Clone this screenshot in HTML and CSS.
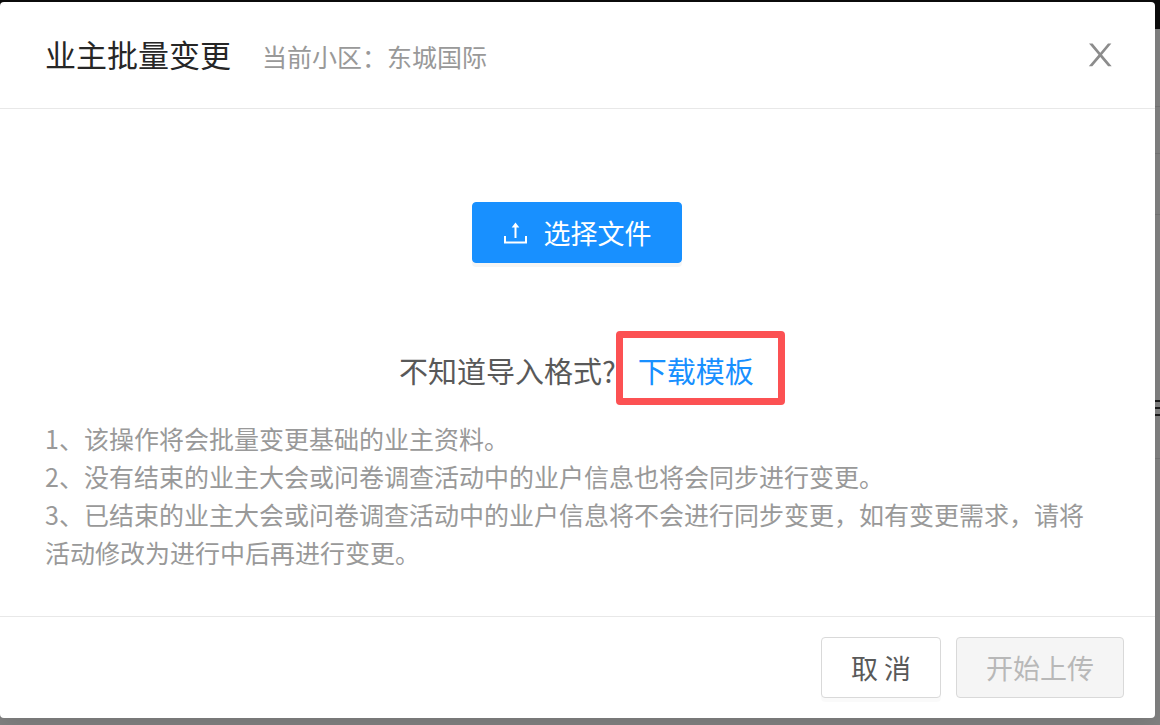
FILE: index.html
```
<!DOCTYPE html>
<html lang="zh-CN">
<head>
    <meta charset="UTF-8">
    <meta name="viewport" content="width=device-width, initial-scale=1.0">
    <title>业主批量变更</title>
    <link rel="stylesheet" href="styles.css">
</head>
<body>
    <!-- page behind the mask -->
    <div class="page" aria-hidden="true">
        <div class="page-header"></div>
        <div class="page-tabs"></div>
        <div class="page-filter"></div>
        <div class="page-title"></div>
        <div class="page-tools">
            <div class="menu-icon"><i></i><i></i><i></i></div>
        </div>
        <div class="page-rows"></div>
    </div>

    <div class="modal" role="dialog" aria-labelledby="modal-title">
        <header class="modal-header">
            <h1 id="modal-title">业主批量变更</h1>
            <span class="community">当前小区：东城国际</span>
            <button class="close" type="button" aria-label="关闭">
                <svg viewBox="0 0 24 26" width="24" height="26" fill="currentColor">
                    <path d="M1 2.5H4.6L12.3 11.7L20 2.5H23.4L14 13.8L23.7 25.2H20.1L12.3 16L4.3 25.2H0.8L10.5 13.8Z"/>
                </svg>
            </button>
        </header>

        <main class="modal-body">
            <button class="btn btn-primary" type="button">
                <svg viewBox="0 0 27 27" width="27" height="27">
                    <path d="M3 17V23.5H24V17" fill="none" stroke="currentColor" stroke-width="2"/>
                    <path d="M13.5 19V7" fill="none" stroke="currentColor" stroke-width="2"/>
                    <path d="M13.5 3.5L17.3 8.5H9.7Z" fill="currentColor"/>
                </svg>
                <span>选择文件</span>
            </button>
            <p class="template">
                <span>不知道导入格式?</span>
                <a href="#">下载模板</a>
            </p>
            <div class="tips">
                <p>1、该操作将会批量变更基础的业主资料。</p>
                <p>2、没有结束的业主大会或问卷调查活动中的业户信息也将会同步进行变更。</p>
                <p>3、已结束的业主大会或问卷调查活动中的业户信息将不会进行同步变更，如有变更需求，请将活动修改为进行中后再进行变更。</p>
            </div>
        </main>

        <footer class="modal-footer">
            <button class="btn" type="button">取 消</button>
            <button class="btn" type="button" disabled>开始上传</button>
        </footer>
    </div>
</body>
</html>
```
FILE: styles.css
```
* {
    margin: 0;
    padding: 0;
    box-sizing: border-box;
}

:root {
    --blue: #1890ff;
    --red: #fc5153;
    --line: #e8e8e8;
    --muted: #999;
}

body {
    position: relative;
    min-height: 100vh;
    padding: 2px 5px 7px 0;
    background-color: #828282;
    color: #595959;
    font-family: "Noto Sans CJK SC", sans-serif;
}

button {
    font-family: inherit;
    cursor: pointer;
}

/* masked page */
.page {
    position: absolute;
    inset: 0;
    overflow: hidden;
}

.page-header {
    height: 29px;
    background-color: #0c0c0c;
}

.page-tabs,
.page-filter,
.page-title,
.page-tools {
    border-bottom: 1px solid #757575;
}

.page-tabs {
    height: 78px;
}

.page-filter {
    height: 47px;
}

.page-title {
    height: 61px;
}

.page-tools {
    display: flex;
    justify-content: flex-end;
    align-items: flex-end;
    height: 244px;
    padding-bottom: 42px;
}

.menu-icon {
    display: grid;
    gap: 5px;
    width: 18px;
}

.menu-icon i {
    height: 2px;
    background-color: #1a1a1a;
}

/* dialog */
.modal {
    position: relative;
    background-color: #fff;
    border-radius: 4px;
    box-shadow: 0 8px 24px rgba(0, 0, 0, 0.1);
}

.modal-header {
    display: flex;
    align-items: center;
    gap: 31px;
    padding: 29px 43px 31px 45px;
    border-bottom: 1px solid var(--line);
}

.modal-header h1 {
    color: #262626;
    font-size: 31px;
    font-weight: 400;
    line-height: 46px;
}

.community {
    color: var(--muted);
    font-size: 25px;
    line-height: 46px;
    padding-top: 2px;
    margin-bottom: -2px;
}

.close {
    display: flex;
    margin-left: auto;
    border: none;
    background: none;
    color: #8c8c8c;
}

.modal-body {
    display: flex;
    flex-direction: column;
    align-items: center;
    padding: 93px 47px 45px 45px;
}

.btn {
    display: flex;
    align-items: center;
    justify-content: center;
    height: 61px;
    padding: 0 29px;
    border: 1px solid #d9d9d9;
    border-radius: 4px;
    background-color: #fff;
    box-shadow: 0 4px 0 rgba(0, 0, 0, 0.02);
    color: #595959;
    font-size: 27px;
    line-height: 40px;
}

.btn-primary {
    gap: 15px;
    border-color: var(--blue);
    background-color: var(--blue);
    box-shadow: 0 4px 0 rgba(0, 0, 0, 0.04);
    color: #fff;
}

.btn:disabled {
    background-color: #f5f5f5;
    box-shadow: none;
    color: #b8b8b8;
    cursor: not-allowed;
}

.template {
    display: flex;
    gap: 22px;
    margin-top: 85px;
    font-size: 29px;
    line-height: 44px;
}

.template a {
    position: relative;
    color: var(--blue);
    text-decoration: none;
}

/* red frame round the download link */
.template a::after {
    content: '';
    position: absolute;
    inset: -17px -31px -13px -22px;
    border: 7px solid var(--red);
    border-radius: 4px;
}

.tips {
    width: 100%;
    margin-top: 27px;
    color: var(--muted);
    font-size: 25px;
    line-height: 38px;
}

.modal-footer {
    display: flex;
    justify-content: flex-end;
    gap: 15px;
    padding: 20px 31px;
    border-top: 1px solid var(--line);
}
```
